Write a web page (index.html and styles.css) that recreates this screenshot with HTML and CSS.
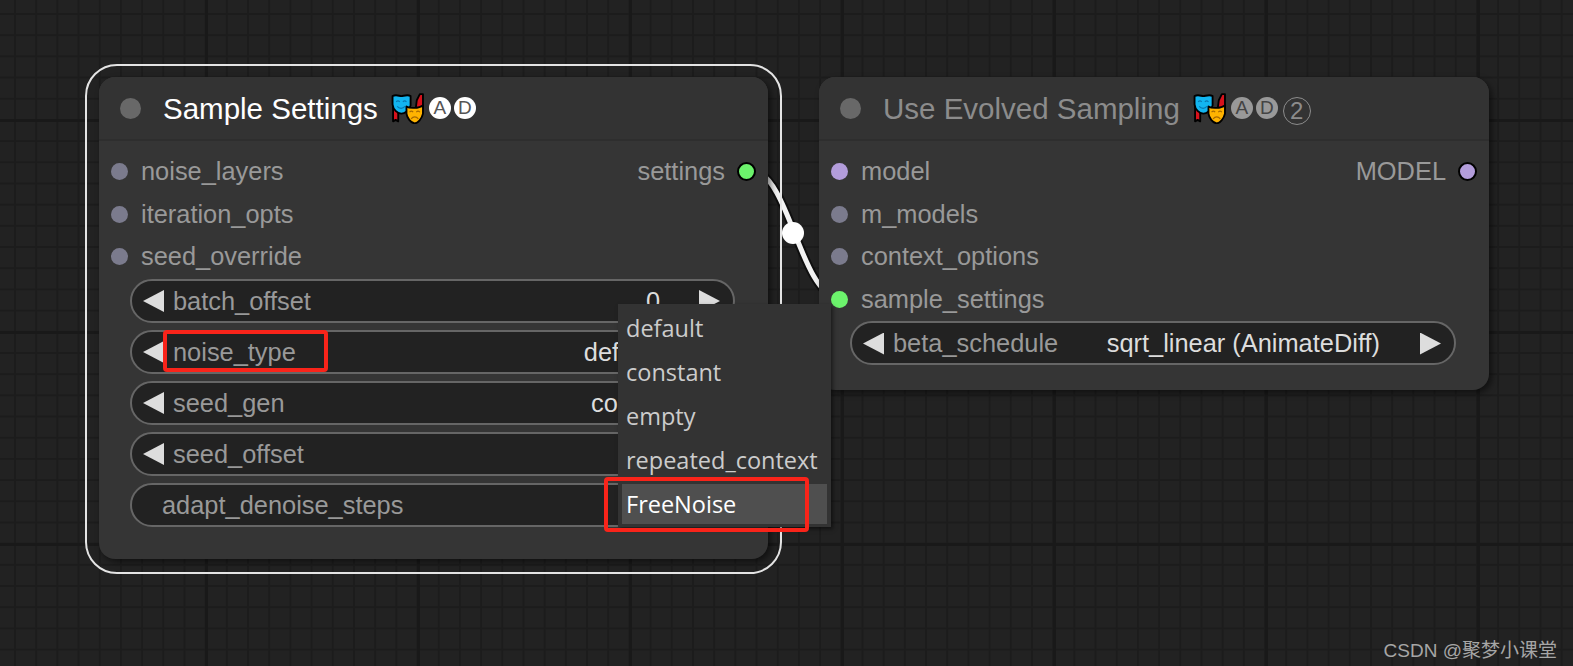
FILE: index.html
```html
<!DOCTYPE html>
<html lang="en">
<head>
<meta charset="utf-8">
<title>Sample Settings</title>
<link rel="stylesheet" href="styles.css">
</head>
<body>
<svg class="defs" width="0" height="0" aria-hidden="true">
  <symbol id="masks" viewBox="0 0 32 30">
    <path d="M2 11L7 18V27.500L4.500 26 2 27.500Z" fill="#d8121c" stroke="#000" stroke-width="1.800" stroke-linejoin="round"/>
    <path d="M24 15L25 7 26.500 4 28 1 31 1V15Z" fill="#d8121c" stroke="#000" stroke-width="1.800" stroke-linejoin="round"/>
    <path d="M1.500 3C5 1 8 3 10 3 12 3 16 1 19 3V12C18 17 13 20 10 20 6 20 2 16 1.500 11Z" fill="#12b5f0" stroke="#000" stroke-width="1.800" stroke-linejoin="round"/>
    <path d="M5 8.500c1-1 2.500-1 3.500 0M11.500 8.500c1-1 2.500-1 3.500 0M6 13c2 2.500 5.500 2.500 7.500 0" fill="none" stroke="#0a78b0" stroke-width="1.100"/>
    <path d="M15 13C18 15 27 15 31 12V20C30 25 26 29 23 29.500 19 29 15.500 24 15 20Z" fill="#ffb300" stroke="#000" stroke-width="1.800" stroke-linejoin="round"/>
    <path d="M18 18.500c1-1 2.500-1 3.500 0M24.500 18.500c1-1 2.500-1 3.500 0M19.500 25c2-2.500 5-2.500 7 0" fill="none" stroke="#a86a00" stroke-width="1.100"/>
  </symbol>
</svg>

<main class="canvas">
  <svg class="wire" width="1573" height="666" viewBox="0 0 1573 666" aria-hidden="true">
    <path class="wire-shadow" d="M754 170C790 180 800 290 838 299"/>
    <path class="wire-line" d="M754 170C790 180 800 290 838 299"/>
    <circle class="wire-dot" cx="793" cy="233" r="11"/>
  </svg>

  <div class="selection"></div>

  <section class="node node-settings">
    <header class="title">
      <span class="title-dot"></span>
      <span class="title-text">Sample Settings</span>
      <svg class="masks"><use href="#masks"/></svg>
      <span class="badge">A</span><span class="badge">D</span>
    </header>
    <div class="rows">
      <div class="row"><span class="socket"></span><span class="label">noise_layers</span><span class="output">settings</span><span class="socket socket-green socket-out"></span></div>
      <div class="row"><span class="socket"></span><span class="label">iteration_opts</span></div>
      <div class="row"><span class="socket"></span><span class="label">seed_override</span></div>
    </div>
    <div class="widgets">
      <div class="widget"><span class="arrow"></span><span class="widget-label">batch_offset</span><span class="value value-num">0</span><span class="arrow arrow-right"></span></div>
      <div class="widget"><span class="arrow"></span><span class="widget-label">noise_type</span><span class="value value-default">default</span></div>
      <div class="widget"><span class="arrow"></span><span class="widget-label">seed_gen</span><span class="value value-constant">constant</span></div>
      <div class="widget"><span class="arrow"></span><span class="widget-label">seed_offset</span></div>
      <div class="widget widget-plain"><span class="widget-label">adapt_denoise_steps</span></div>
    </div>
  </section>

  <section class="node node-evolved">
    <header class="title title-muted">
      <span class="title-dot"></span>
      <span class="title-text">Use Evolved Sampling</span>
      <svg class="masks"><use href="#masks"/></svg>
      <span class="badge badge-muted">A</span><span class="badge badge-muted">D</span><span class="badge-ring">2</span>
    </header>
    <div class="rows">
      <div class="row"><span class="socket socket-purple"></span><span class="label">model</span><span class="output">MODEL</span><span class="socket socket-purple socket-out"></span></div>
      <div class="row"><span class="socket"></span><span class="label">m_models</span></div>
      <div class="row"><span class="socket"></span><span class="label">context_options</span></div>
      <div class="row"><span class="socket socket-green"></span><span class="label">sample_settings</span></div>
    </div>
    <div class="widgets">
      <div class="widget"><span class="arrow"></span><span class="widget-label">beta_schedule</span><span class="value value-beta">sqrt_linear (AnimateDiff)</span><span class="arrow arrow-right"></span></div>
    </div>
  </section>

  <ul class="menu">
    <li class="menu-item">default</li>
    <li class="menu-item">constant</li>
    <li class="menu-item">empty</li>
    <li class="menu-item">repeated_context</li>
    <li class="menu-item menu-item-active">FreeNoise</li>
  </ul>

  <div class="mark mark-type"></div>
  <div class="mark mark-free"></div>

  <div class="watermark">CSDN @聚梦小课堂</div>
</main>
</body>
</html>
```

FILE: styles.css
```css
* { box-sizing: border-box; }
html, body { margin: 0; padding: 0; }
body { width: 1573px; height: 666px; overflow: hidden; background: #222; font-family: "Liberation Sans", Arial, sans-serif; }
.defs { position: absolute; }

.canvas {
  position: relative;
  width: 1573px;
  height: 666px;
  overflow: hidden;
  background-color: #222;
  background-image:
    linear-gradient(90deg, #191919 3px, transparent 3px),
    linear-gradient(#191919 3px, transparent 3px),
    linear-gradient(90deg, #1c1c1c 2px, transparent 2px),
    linear-gradient(#1c1c1c 2px, transparent 2px);
  background-size: 212px 212px, 212px 212px, 21.2px 21.2px, 21.2px 21.2px;
  background-position: 205px 0, 0 119px, 14px 0, 0 13px;
}

.wire { position: absolute; left: 0; top: 0; }
.wire-shadow { fill: none; stroke: #000; stroke-opacity: .55; stroke-width: 9; }
.wire-line { fill: none; stroke: #f2f2f2; stroke-width: 5; }
.wire-dot { fill: #fff; }

.selection {
  position: absolute;
  left: 85px;
  top: 64px;
  width: 697px;
  height: 510px;
  border: 2px solid #e4e4e4;
  border-radius: 32px;
}

.node {
  position: absolute;
  top: 77px;
  background: #353535;
  border-radius: 16px;
  box-shadow: 3px 3px 6px rgba(0, 0, 0, .5);
}
.node-settings { left: 99px; width: 669px; height: 482px; }
.node-evolved { left: 819px; width: 670px; height: 313px; }

.title {
  display: flex;
  align-items: center;
  height: 64px;
  padding-left: 21px;
  background: #333;
  border-bottom: 2px solid #2e2e2e;
  border-radius: 16px 16px 0 0;
  color: #fff;
}
.title-muted { color: #8c8c8c; }
.title-dot { flex: none; width: 21px; height: 21px; margin-right: 22px; border-radius: 50%; background: #686868; }
.title-text { padding-top: 2px; font-size: 29.500px; line-height: 62px; white-space: nowrap; }
.masks { flex: none; width: 33px; height: 31px; margin: 0 5px 0 13px; }
.badge {
  flex: none;
  display: flex;
  align-items: center;
  justify-content: center;
  width: 22px;
  height: 22px;
  margin-right: 3px;
  border-radius: 50%;
  background: #fff;
  color: #555;
  font-size: 19px;
}
.badge-muted { background: #999; color: #444; }
.badge-ring {
  flex: none;
  display: flex;
  align-items: center;
  justify-content: center;
  width: 28px;
  height: 28px;
  margin: 5px 0 0 2px;
  border: 1.500px solid #8c8c8c;
  border-radius: 50%;
  color: #8c8c8c;
  font-size: 24px;
}

.rows { padding-top: 9.500px; }
.row {
  display: flex;
  align-items: center;
  height: 42.500px;
  padding: 0 12px;
  font-size: 25.400px;
  color: #999;
}
.label { margin-left: 13px; white-space: nowrap; }
.output { margin: 0 12px 0 auto; white-space: nowrap; }
.socket { flex: none; width: 17px; height: 17px; border-radius: 50%; background: #7b7b8d; }
.socket-green { background: #6cf36c; }
.socket-purple { background: #b39ddb; }
.socket-out { width: 19px; height: 19px; border: 2px solid #000; }

.widgets { display: flex; flex-direction: column; gap: 7px; margin: 0.500px 33px 0 31px; }
.widget {
  display: flex;
  align-items: center;
  height: 44px;
  padding: 1px 13px 0 11px;
  background: #222;
  border: 2px solid #666;
  border-radius: 22px;
  font-size: 25.400px;
  color: #999;
  white-space: nowrap;
}
.widget-plain { padding-left: 30px; }
.arrow { flex: none; width: 21px; height: 22px; margin-right: 9px; background: #ddd; clip-path: polygon(0 50%, 100% 0, 100% 100%); }
.arrow-right { margin: 0; clip-path: polygon(0 0, 100% 50%, 0 100%); }
.value { margin-left: auto; color: #ddd; }
.value-num { margin-right: 39px; }
.value-default { margin-right: 60px; }
.value-constant { margin-right: 33px; }
.value-beta { margin-right: 40px; }

.menu {
  position: absolute;
  left: 618px;
  top: 304px;
  width: 213px;
  height: 223px;
  margin: 0;
  padding: 4px 4px 0;
  list-style: none;
  background: #333;
  box-shadow: 2px 2px 4px rgba(0, 0, 0, .5);
  font-family: "Open Sans", "Noto Sans", sans-serif;
  font-size: 23.500px;
  color: #ccc;
}
.menu-item { height: 44px; padding-left: 4px; line-height: 40px; white-space: nowrap; }
.menu-item-active { height: 40px; background: #4f4f4f; color: #fff; }

.mark { position: absolute; border: 4px solid #f9241a; border-radius: 4px; }
.mark-type { left: 163px; top: 330px; width: 165px; height: 42px; }
.mark-free { left: 604px; top: 477px; width: 205px; height: 55px; }

.watermark {
  position: absolute;
  right: 16px;
  top: 635px;
  font-family: "Liberation Sans", "Noto Sans CJK SC", sans-serif;
  font-size: 19px;
  color: #a6a6a6;
  white-space: nowrap;
}
```
